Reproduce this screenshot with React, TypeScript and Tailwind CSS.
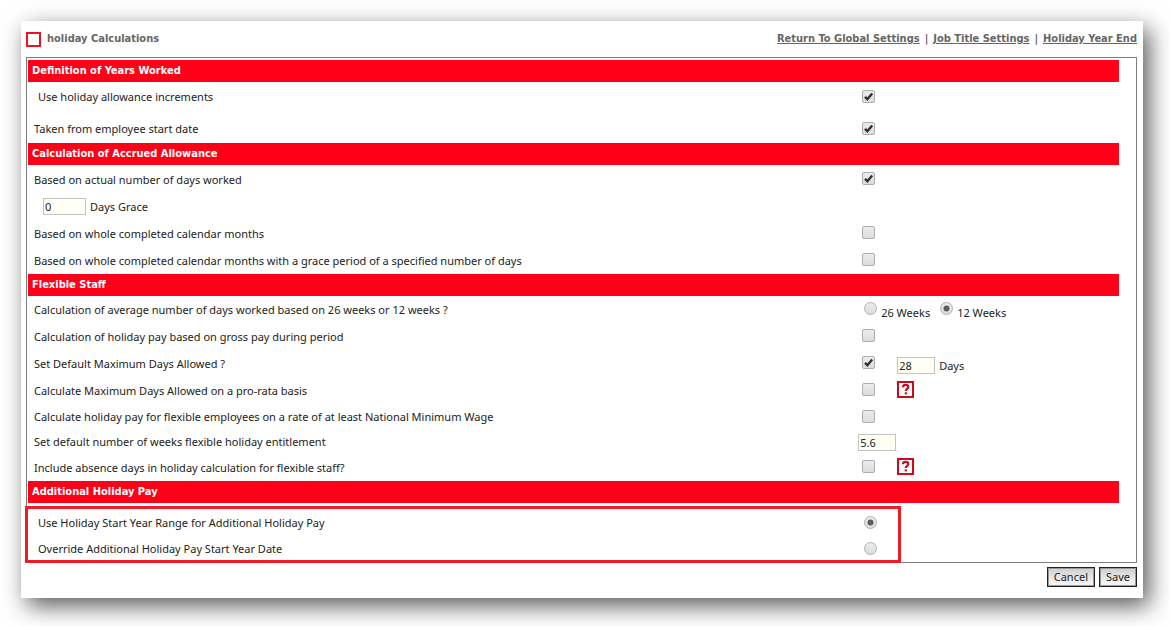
import type { ReactNode } from "react";

const rowSizes = {
  sm: "min-h-6",
  md: "min-h-[26px]",
  lg: "min-h-[27px]",
  xl: "min-h-7",
};

interface SectionProps {
  readonly title: string;
  readonly className?: string;
  readonly children: ReactNode;
}

function Section({ title, className = "", children }: SectionProps) {
  return (
    <section>
      <h2 className="h-[22px] bg-[#ff0018] pl-1 font-['DejaVu_Sans_Condensed',sans-serif] leading-[22px] font-bold text-white">
        {title}
      </h2>
      <div className={`flex flex-col ${className}`}>{children}</div>
    </section>
  );
}

interface RowProps {
  readonly label: string;
  readonly htmlFor?: string;
  readonly size?: keyof typeof rowSizes;
  readonly indent?: boolean;
  readonly children?: ReactNode;
}

function Row({ label, htmlFor, size = "lg", indent, children }: RowProps) {
  return (
    <div className={`flex items-center ${rowSizes[size]}`}>
      <div className={`w-[76%] shrink-0 ${indent ? "pl-[10px]" : "pl-[6px]"}`}>
        {htmlFor ? <label htmlFor={htmlFor}>{label}</label> : <span id="weeks-label">{label}</span>}
      </div>
      <div className="flex items-center pl-px whitespace-nowrap">{children}</div>
    </div>
  );
}

function Checkbox({ id, checked }: { readonly id: string; readonly checked?: boolean }) {
  return (
    <span className="relative mb-[2px] ml-1 block size-[13px]">
      <input
        id={id}
        type="checkbox"
        defaultChecked={checked}
        className="peer block size-[13px] appearance-none rounded-[2px] border border-[#aeaeae] bg-linear-to-b from-[#ececec] to-[#dcdcdc]"
      />
      <svg
        viewBox="0 0 13 13"
        className="pointer-events-none absolute inset-0 hidden size-[13px] peer-checked:block"
        aria-hidden="true"
      >
        <path d="M3 6.8 5.4 9.2 10.2 3.4" fill="none" stroke="#333" strokeWidth="2.4" />
      </svg>
    </span>
  );
}

interface RadioProps {
  readonly id: string;
  readonly name: string;
  readonly checked?: boolean;
}

function Radio({ id, name, checked }: RadioProps) {
  return (
    <span className="relative mb-[2px] ml-[6px] block size-[13px]">
      <input
        id={id}
        name={name}
        type="radio"
        defaultChecked={checked}
        className="peer block size-[13px] appearance-none rounded-full border border-[#aeaeae] bg-linear-to-b from-[#ececec] to-[#dcdcdc]"
      />
      <svg
        viewBox="0 0 13 13"
        className="pointer-events-none absolute inset-0 hidden size-[13px] peer-checked:block"
        aria-hidden="true"
      >
        <circle cx="6.5" cy="6.5" r="3" fill="#5c5c5c" />
      </svg>
    </span>
  );
}

interface NumberBoxProps {
  readonly id: string;
  readonly value: string;
  readonly wide?: boolean;
}

function NumberBox({ id, value, wide }: NumberBoxProps) {
  return (
    <input
      id={id}
      type="text"
      defaultValue={value}
      className={`block h-[17px] border border-[#c3c3c3] bg-[#fffff5] px-px leading-[15px] text-[#222] ${wide ? "w-[43px]" : "w-[38px]"}`}
    />
  );
}

function HelpButton({ label }: { readonly label: string }) {
  return (
    <button
      type="button"
      aria-label={label}
      className="mb-[2px] ml-[22px] flex size-[17px] items-center justify-center border-2 border-[#cc0a1c] bg-white text-[#cc0a1c]"
    >
      <svg viewBox="0 0 13 13" className="size-[13px]" fill="none" aria-hidden="true">
        <path
          d="M4 4.2C4 2.5 5.2 1.9 6.6 1.9S9.2 2.7 9.2 4.1C9.2 6 6.8 5.9 6.8 8"
          stroke="currentColor"
          strokeWidth="2.2"
        />
        <path d="M5.7 9.3h2.2v2.1H5.7z" fill="currentColor" />
      </svg>
    </button>
  );
}

function ActionButton({ children }: { readonly children: ReactNode }) {
  return (
    <button
      type="button"
      className="h-5 border border-[#222] bg-linear-to-b from-[#cfcfcf] to-[#fafafa] px-[6px] leading-[18px] text-[#222] outline-1 -outline-offset-2 outline-[#999]"
    >
      {children}
    </button>
  );
}

export default function App() {
  return (
    <div className="pt-[21px] pr-[27px] pb-[28px] pl-[21px] font-['Noto_Sans',sans-serif] text-[11px] leading-4 text-[#222]">
      <main className="bg-white pr-[6px] pb-[11px] pl-[5px] shadow-[6px_8px_22px_rgba(0,0,0,0.65)]">
        <header className="flex h-9 items-center justify-between font-['DejaVu_Sans_Condensed',sans-serif] font-bold text-[#666]">
          <div className="flex items-center gap-[6px]">
            <span className="size-[15px] border-2 border-[#ee1122]" aria-hidden="true" />
            <h1>holiday Calculations</h1>
          </div>
          <nav className="flex gap-[5px]">
            <a href="#global" className="underline">Return To Global Settings</a>
            <span>|</span>
            <a href="#job-title" className="underline">Job Title Settings</a>
            <span>|</span>
            <a href="#year-end" className="underline">Holiday Year End</a>
          </nav>
        </header>

        <form className="relative border border-[#7c7c7c] pt-[2px] pr-[17px] pl-px">
          <Section title="Definition of Years Worked" className="gap-1 pt-px">
            <Row label="Use holiday allowance increments" htmlFor="increments" size="xl" indent>
              <Checkbox id="increments" checked />
            </Row>
            <Row label="Taken from employee start date" htmlFor="start-date" size="xl">
              <Checkbox id="start-date" checked />
            </Row>
          </Section>

          <Section title="Calculation of Accrued Allowance" className="pt-px">
            <Row label="Based on actual number of days worked" htmlFor="actual-days">
              <Checkbox id="actual-days" checked />
            </Row>
            <div className="flex h-[27px] items-center gap-1 pl-[15px]">
              <NumberBox id="grace" value="0" wide />
              <label htmlFor="grace">Days Grace</label>
            </div>
            <Row label="Based on whole completed calendar months" htmlFor="whole-months">
              <Checkbox id="whole-months" />
            </Row>
            <Row
              label="Based on whole completed calendar months with a grace period of a specified number of days"
              htmlFor="months-grace"
            >
              <Checkbox id="months-grace" />
            </Row>
          </Section>

          <Section title="Flexible Staff">
            <Row label="Calculation of average number of days worked based on 26 weeks or 12 weeks ?">
              <div role="radiogroup" aria-labelledby="weeks-label" className="flex items-center">
                <Radio id="weeks-26" name="weeks" />
                <label htmlFor="weeks-26" className="mr-1 ml-1 pt-[6px]">26 Weeks</label>
                <Radio id="weeks-12" name="weeks" checked />
                <label htmlFor="weeks-12" className="ml-1 pt-[6px]">12 Weeks</label>
              </div>
            </Row>
            <Row label="Calculation of holiday pay based on gross pay during period" htmlFor="gross-pay">
              <Checkbox id="gross-pay" />
            </Row>
            <Row label="Set Default Maximum Days Allowed ?" htmlFor="max-days-on">
              <Checkbox id="max-days-on" checked />
              <div className="ml-[22px] flex items-center gap-1 pt-1">
                <NumberBox id="max-days" value="28" />
                <label htmlFor="max-days">Days</label>
              </div>
            </Row>
            <Row label="Calculate Maximum Days Allowed on a pro-rata basis" htmlFor="pro-rata">
              <Checkbox id="pro-rata" />
              <HelpButton label="Help on pro-rata basis" />
            </Row>
            <Row
              label="Calculate holiday pay for flexible employees on a rate of at least National Minimum Wage"
              htmlFor="min-wage"
              size="md"
            >
              <Checkbox id="min-wage" />
            </Row>
            <Row label="Set default number of weeks flexible holiday entitlement" htmlFor="entitlement" size="sm">
              <NumberBox id="entitlement" value="5.6" />
            </Row>
            <Row
              label="Include absence days in holiday calculation for flexible staff?"
              htmlFor="absence"
              size="lg"
            >
              <Checkbox id="absence" />
              <HelpButton label="Help on absence days" />
            </Row>
          </Section>

          <Section title="Additional Holiday Pay" className="pt-[7px]">
            <Row
              label="Use Holiday Start Year Range for Additional Holiday Pay"
              htmlFor="use-range"
              size="md"
              indent
            >
              <Radio id="use-range" name="start-year" checked />
            </Row>
            <Row
              label="Override Additional Holiday Pay Start Year Date"
              htmlFor="override-range"
              size="md"
              indent
            >
              <Radio id="override-range" name="start-year" />
            </Row>
          </Section>
          {/* highlight box round the two start year options */}
          <div className="pointer-events-none absolute -bottom-px -left-[2px] h-[57px] w-[79%] border-3 border-[#ee1c24]" />
        </form>

        <div className="flex justify-end gap-1 pt-1">
          <ActionButton>Cancel</ActionButton>
          <ActionButton>Save</ActionButton>
        </div>
      </main>
    </div>
  );
}
